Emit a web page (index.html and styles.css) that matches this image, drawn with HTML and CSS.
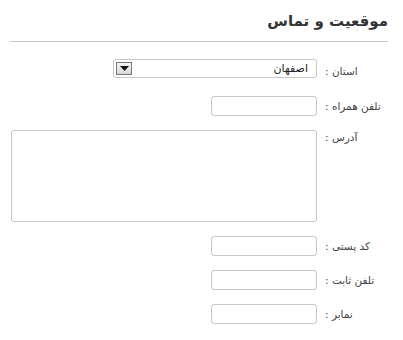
FILE: index.html
```html
<!DOCTYPE html>
<html lang="fa" dir="rtl">
<head>
<meta charset="utf-8">
<title>موقعیت و تماس</title>
<link rel="stylesheet" href="styles.css">
</head>
<body>
<div class="panel">
  <h2 class="title">موقعیت و تماس</h2>
  <div class="form">
    <label class="lbl lbl-mid">استان :</label>
    <div class="select">
      <span class="select-text">اصفهان</span>
      <span class="select-btn"><svg width="9" height="5" viewBox="0 0 9 5"><path d="M0 0H9L4.5 5Z" fill="#111"/></svg></span>
    </div>

    <label class="lbl lbl-mid">تلفن همراه :</label>
    <input class="field" type="text">

    <label class="lbl lbl-top">آدرس :</label>
    <textarea class="area"></textarea>

    <label class="lbl lbl-mid">کد پستی :</label>
    <input class="field" type="text">

    <label class="lbl lbl-mid">تلفن ثابت :</label>
    <input class="field" type="text">

    <label class="lbl lbl-mid">نمابر :</label>
    <input class="field" type="text">
  </div>
</div>
</body>
</html>
```

FILE: styles.css
```css
html, body {
  margin: 0;
  padding: 0;
  background: #fff;
}
body {
  font-family: "DejaVu Sans", sans-serif;
  direction: rtl;
  color: #444;
}
.panel {
  padding: 0 15px 0 10px;
}
.title {
  margin: 0;
  padding: 12px 0 10px;
  font-size: 15px;
  font-weight: bold;
  line-height: 19px;
  color: #333;
  border-bottom: 1px solid #c8c8c8;
}
.form {
  display: grid;
  grid-template-columns: 66px 1fr;
  column-gap: 5px;
  row-gap: 14px;
  margin-top: 17px;
  align-items: center;
}
.lbl {
  font-size: 10.5px;
  color: #444;
  text-align: left;
  white-space: nowrap;
  padding-left: 3px;
}
.lbl-top {
  align-self: start;
  padding-top: 1px;
}
.select {
  justify-self: start;
  width: 204px;
  height: 19px;
  box-sizing: border-box;
  border: 1px solid #c8c8c8;
  border-radius: 3px;
  display: flex;
  align-items: center;
  justify-content: space-between;
  padding: 0 8px 0 2px;
  margin-bottom: 4px;
  font-size: 11px;
  color: #222;
}
.select-btn {
  width: 16px;
  height: 13px;
  box-sizing: border-box;
  border: 1px solid #777;
  background: linear-gradient(#f4f4f4, #d8d8d8);
  display: flex;
  align-items: center;
  justify-content: center;
}
.field {
  justify-self: start;
  width: 106px;
  height: 20px;
  box-sizing: border-box;
  border: 1px solid #c8c8c8;
  border-radius: 3px;
  margin: 0;
  padding: 0 4px;
  font-family: inherit;
  font-size: 11px;
  background: #fff;
  outline: none;
}
.area {
  justify-self: start;
  width: 306px;
  height: 92px;
  box-sizing: border-box;
  border: 1px solid #c8c8c8;
  border-radius: 3px;
  margin: 0;
  padding: 4px;
  resize: none;
  font-family: inherit;
  font-size: 11px;
  outline: none;
}
```
